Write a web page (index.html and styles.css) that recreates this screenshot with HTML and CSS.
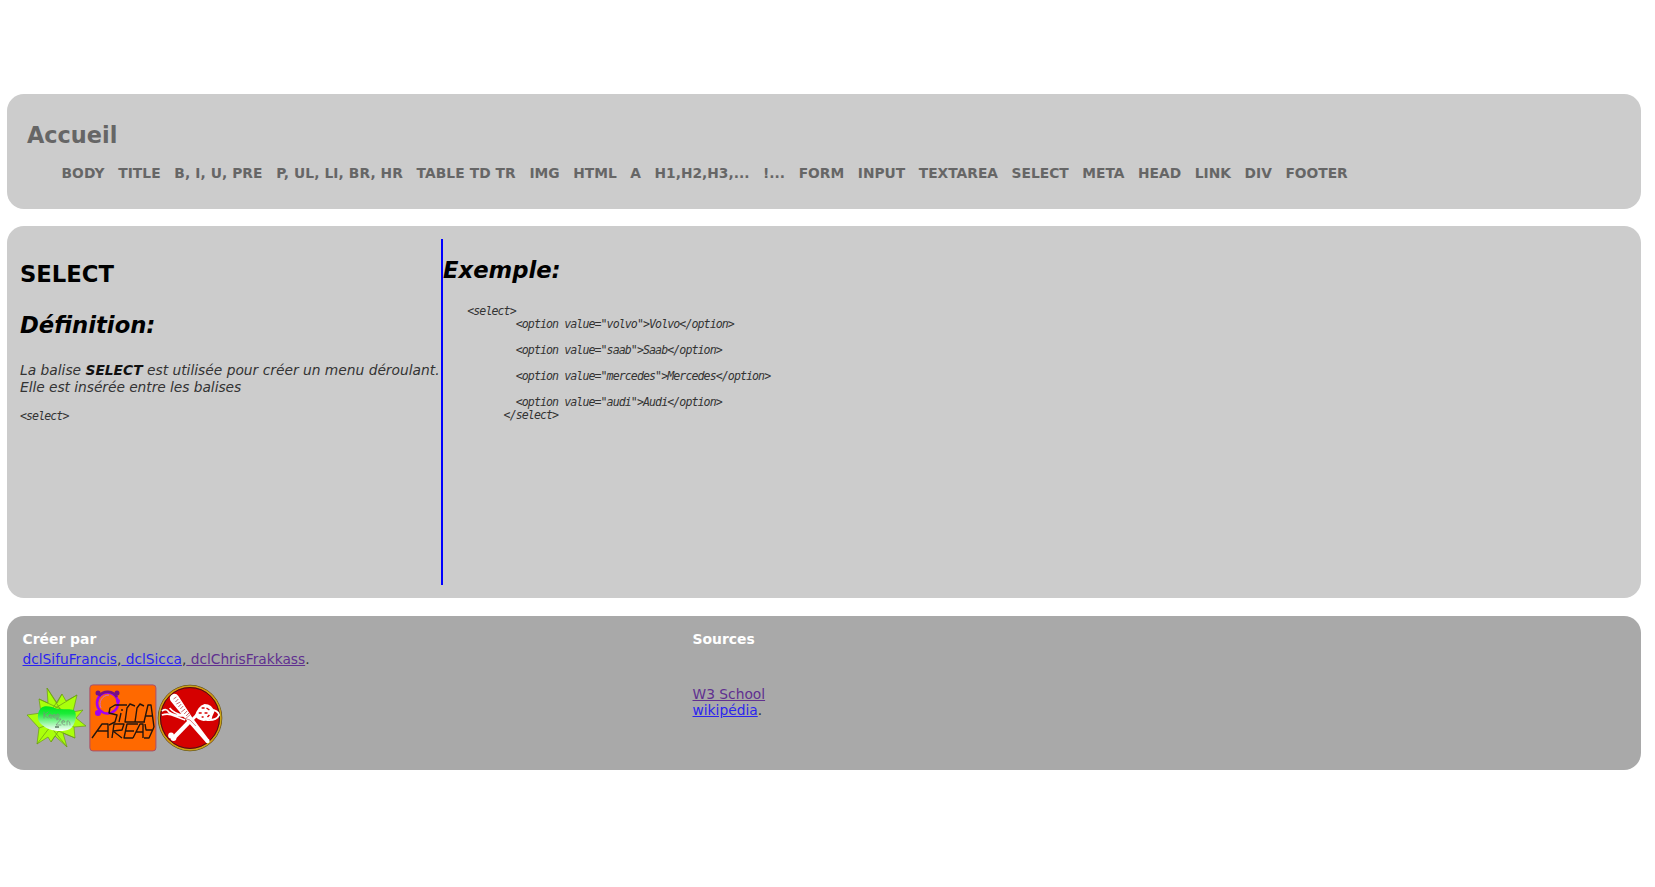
FILE: index.html
```html
<!DOCTYPE html>
<html lang="fr">
<head>
<meta charset="utf-8">
<title>SELECT</title>
<link rel="stylesheet" href="styles.css">
</head>
<body>
<header class="panel header">
  <h1 class="home">Accueil</h1>
  <nav class="nav"><span>BODY</span><span>TITLE</span><span>B, I, U, PRE</span><span>P, UL, LI, BR, HR</span><span>TABLE TD TR</span><span>IMG</span><span>HTML</span><span>A</span><span>H1,H2,H3,...</span><span>!...</span><span>FORM</span><span>INPUT</span><span>TEXTAREA</span><span>SELECT</span><span>META</span><span>HEAD</span><span>LINK</span><span>DIV</span><span>FOOTER</span></nav>
</header>
<main class="panel main">
  <section class="definition">
    <h2 class="tag">SELECT</h2>
    <h2 class="sub">Définition:</h2>
    <p class="text">La balise <b>SELECT</b> est utilisée pour créer un menu déroulant.<br><span class="line2">Elle est insérée entre les balises</span></p>
    <pre class="code">&lt;select&gt;</pre>
  </section>
  <section class="example">
    <h2 class="sub">Exemple:</h2>
<pre class="code">    &lt;select&gt;
            &lt;option value="volvo"&gt;Volvo&lt;/option&gt;

            &lt;option value="saab"&gt;Saab&lt;/option&gt;

            &lt;option value="mercedes"&gt;Mercedes&lt;/option&gt;

            &lt;option value="audi"&gt;Audi&lt;/option&gt;
          &lt;/select&gt;</pre>
  </section>
</main>
<footer class="panel footer">
  <section class="authors">
    <h3 class="label">Créer par</h3>
    <p class="links"><a href="#">dclSifuFrancis</a>,<a href="#">&nbsp;dclSicca</a>,<a href="#" class="seen">&nbsp;dclChrisFrakkass</a>.</p>
    <div class="logos">
      <svg class="zen" width="63" height="68" viewBox="0 0 63 68">
        <defs><linearGradient id="bean" x1="0" y1="0" x2="0" y2="1"><stop offset="0" stop-color="#00e51c"/><stop offset=".3" stop-color="#1cec38"/><stop offset="1" stop-color="#fff"/></linearGradient></defs>
        <g fill="#aaff0b" stroke="#6a9b16" stroke-width=".7" stroke-linejoin="round">
          <path d="M24 4 34 19 39 10 43 17 54 11 50 28 60 26 53 34 63 42 51 43 52 54 40 49 44 63 32 52 28 58 25 53 14 60 16 44 4 31 18 29 16 15 25 19Z"/>
          <path d="M24 4 39 28M39 10 28 27M54 11 24 29M16 15 44 28M16 44 27 40M51 43 40 38M44 63 27 42M28 58 39 42M14 60 30 39M52 54 26 43" fill="none"/>
        </g>
        <path d="M15 31C16 22 22 21 29 23 38 27 45 24 51 26 55 30 52 42 47 45 38 49 25 47 18 40Q14 36 15 31Z" fill="url(#bean)"/>
        <g fill="none" stroke="#7d917f" stroke-width=".8" stroke-linecap="round">
          <path d="M21 28V34M25 28 21 31 25 34M26 32H29Q28 29 26 31 25 34 29 34M30 32H33Q32 29 30 31 29 34 33 34M34 36V30Q38 30 35 34"/>
          <path d="M34 35H38L33 41H38M39 38H42Q41 35 39 37 38 41 42 41M44 41V37Q47 36 47 41"/>
        </g><path d="M32 43H36" stroke="#253b29"/>
      </svg>
      <svg class="sicca" width="68" height="68" viewBox="0 0 68 68">
        <rect x=".9" y=".9" width="66" height="66" rx="3" fill="#ff6900" stroke="#a8506b"/>
        <g fill="none" stroke-width="2.6">
          <circle cx="18.5" cy="19" r="10.5" stroke="#a100f2"/>
          <path d="M10 12A11 11 0 0 1 28 13" stroke="#761087"/>
          <path d="M12 24A9 9 0 0 1 20 11" stroke="#cf6acb" stroke-width="1"/>
        </g>
        <g fill="#a100f2"><circle cx="9" cy="9" r="2.5" fill="#761087"/><circle cx="28" cy="9" r="2.5" fill="#761087"/><circle cx="9" cy="29" r="3"/><circle cx="29" cy="17" r="2"/></g>
        <g fill="none" stroke="#24150c" stroke-width="1.4" stroke-linejoin="round">
          <path d="M38 21H26L21 24 20 29 28 31 26 38 20 41M32 29 30 38M33 25V27M46 38H36L38 24 41 20 46 22M56 38H46L48 24 51 20 55 22M55 38 59 21 62 21 65 43M57 32H64"/>
          <path d="M3 54 13 40H19V54M8 47H19M23 54 25 40H35L33 46 24 47 33 54M49 40H38L35 54H44M37 47H45M44 54 51 40H54V54M47 48H54M65 43 60 54H55M56 40 57 46H63"/>
        </g>
      </svg>
      <svg class="frakkass" width="66" height="68" viewBox="0 0 68 68" preserveAspectRatio="none">
        <circle cx="34" cy="34" r="32.8" fill="#d50000" stroke="#655b20" stroke-width="1"/>
        <circle cx="34" cy="34" r="31.7" fill="none" stroke="#c8a514" stroke-width="1.6"/>
        <circle cx="34" cy="34" r="30.4" fill="none" stroke="#421414" stroke-width="1"/>
        <path d="M15 11Q19 8 22 12L36 33 53 55 50 58 31 37 14 17Q12 13 15 11Z" fill="#fff"/>
        <path d="M35 36 18 53" stroke="#fff" stroke-width="4.4"/><path d="M41 31 34 38" stroke="#fff" stroke-width="3"/>
        <circle cx="14.5" cy="51.5" r="3" fill="#fff"/><circle cx="17" cy="54" r="3" fill="#fff"/><circle cx="52" cy="57" r="2.2" fill="#fff"/>
        <path d="M5 31Q12 29 18 32L29 36M5 27Q10 24 12 28 18 32 29 32M13 24Q18 30 27 31" fill="none" stroke="#fff" stroke-width="1.7"/>
        <path d="M39 32Q42 22 49 20 57 20 59 28 56 37 48 37 42 36 39 32Z" fill="#fff"/>
        <path d="M55 26Q63 26 64 31 61 37 51 36M52 25Q58 29 55 36" fill="none" stroke="#fff" stroke-width="1.8"/>
        <path d="M46 24H49M51 24 54 26M43 29H46M49 29H52M46 33H48M52 33 54 31" stroke="#d50000" stroke-width="1.5"/>
        <path d="M17 15 20 13M19 18 22 15M20 20 24 18M22 23 25 20M24 25 27 22M25 28 29 25M28 30 31 27M30 32 33 29" stroke="#c76368" stroke-width="1"/>
        <path d="M27 34 34 36 40 42M35 30 29 35" fill="none" stroke="#c45256" stroke-width=".7"/>
      </svg>
    </div>
  </section>
  <section class="sources">
    <h3 class="label">Sources</h3>
    <p class="source-list"><a href="#" class="seen">W3 School</a><br><a href="#">wikipédia</a>.</p>
  </section>
</footer>
</body>
</html>
```
FILE: styles.css
```css
* { box-sizing: border-box; }
body { margin: 0; padding: 94px 14px 0 7px; background: #fff; color: #333; font: 13.8px/16.6px "DejaVu Sans", sans-serif; }
h1, h2, h3, p, pre { margin: 0; }
.panel { border-radius: 17px; background: #ccc; margin-bottom: 17.5px; }
.header { height: 114.5px; padding: 28px 20px 0; color: #666; font-weight: bold; }
.home { font-size: 22.4px; line-height: 26px; }
.nav { display: flex; gap: 13.6px; margin: 17px 0 0 34.5px; white-space: nowrap; }
.nav span:nth-child(-n+5) { letter-spacing: 0.09px; }
.main { display: flex; height: 372px; padding: 13px; }
.definition { width: 421px; white-space: nowrap; }
.example { flex: 1; border-left: 2px solid #00f; }
.tag, .sub { color: #000; font-size: 22.7px; line-height: 26px; }
.tag { margin-top: 22px; }
.sub { margin-top: 25px; font-style: italic; }
.example .sub { margin-top: 18px; }
.text { margin-top: 24px; font-style: italic; line-height: 16.5px; }
.text b { color: #111; }
.line2 { letter-spacing: -0.05px; }
.code { font: italic 11.6px/13px "DejaVu Sans Mono", monospace; letter-spacing: -0.92px; margin-top: 14.5px; }
.example .code { margin-top: 21.5px; }
.footer { display: flex; height: 154.5px; padding: 15px 15.5px; background: #a9a9a9; }
.authors { width: 670px; }
.label { color: #fff; font-size: 13.9px; line-height: 17px; }
.links { margin-top: 3.5px; font-size: 13.75px; }
.logos { display: flex; margin-top: 16px; height: 68px; }
.zen { margin-right: 3px; }
.source-list { margin-top: 38px; }
a { color: #2c25ee; text-decoration: underline; }
a.seen { color: #603090; }
```
